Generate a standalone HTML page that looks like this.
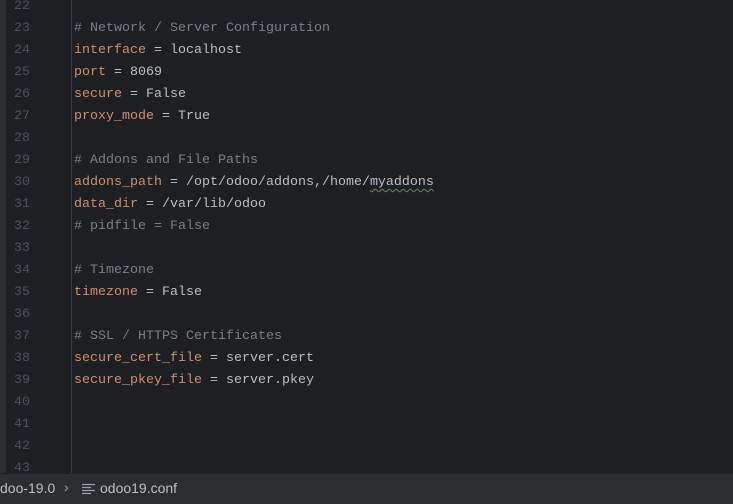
<!DOCTYPE html>
<html><head><style>
html,body{margin:0;padding:0;width:733px;height:503px;overflow:hidden;background:#1e1f22;}
.strip{position:absolute;left:0;top:0;width:6px;height:473px;background:#2b2d30;}
.div{position:absolute;left:71px;top:0;width:1px;height:473px;background:#393b40;}
.ln{position:absolute;left:0;width:30px;text-align:right;font:13.33px "Liberation Mono",monospace;color:#4b5059;}
.code{position:absolute;left:74px;font:13.33px "Liberation Mono",monospace;color:#bcbec4;white-space:pre;}
.k{color:#cf8e6d}.c{color:#7a7e85}
.sq{text-decoration:underline wavy #6a8759;text-decoration-thickness:1px;text-underline-offset:3px}
.status{position:absolute;left:0;top:473px;width:733px;height:30px;background:#2b2d30;border-top:1px solid #1e1f22;font:14px "Liberation Sans",sans-serif;color:#bcbec4;}
</style></head><body>
<div class="strip"></div><div class="div"></div>
<div id="g"></div>
<div class="status">
<span style="position:absolute;left:0;top:6px">doo-19.0</span>
<span style="position:absolute;left:64px;top:5px;color:#9da0a8">›</span>
<svg style="position:absolute;left:82px;top:9px" width="13" height="12"><path d="M0 1.5h13M0 4.5h9M0 7.5h13M0 10.5h9" stroke="#9da0a8" stroke-width="1.2"/></svg>
<span style="position:absolute;left:100px;top:6px">odoo19.conf</span>
</div>
<script>
var L={23:'<span class="c"># Network / Server Configuration</span>',24:'<span class="k">interface</span> = localhost',25:'<span class="k">port</span> = 8069',26:'<span class="k">secure</span> = False',27:'<span class="k">proxy_mode</span> = True',29:'<span class="c"># Addons and File Paths</span>',30:'<span class="k">addons_path</span> = /opt/odoo/addons,/home/<span class="sq">myaddons</span>',31:'<span class="k">data_dir</span> = /var/lib/odoo',32:'<span class="c"># pidfile = False</span>',34:'<span class="c"># Timezone</span>',35:'<span class="k">timezone</span> = False',37:'<span class="c"># SSL / HTTPS Certificates</span>',38:'<span class="k">secure_cert_file</span> = server.cert',39:'<span class="k">secure_pkey_file</span> = server.pkey'};
var h='';for(var n=22;n<=43;n++){var t=5+(n-22)*22-6;h+='<div class="ln" style="top:'+t+'px">'+n+'</div>';if(L[n])h+='<div class="code" style="top:'+t+'px">'+L[n]+'</div>';}
document.getElementById('g').innerHTML=h;
</script>
</body></html>
